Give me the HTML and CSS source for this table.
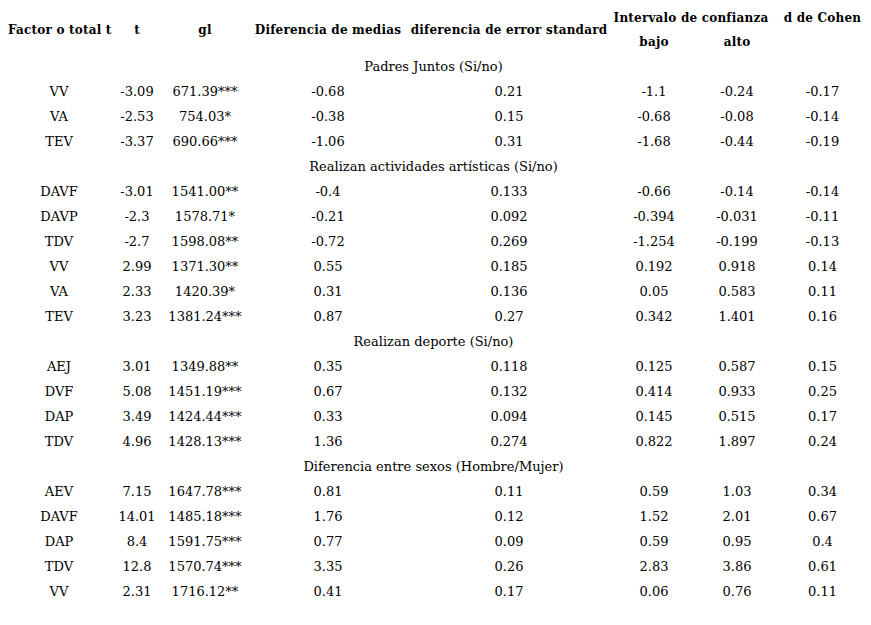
FILE: index.html
```html
<!DOCTYPE html>
<html lang="es">
<head>
<meta charset="utf-8">
<link rel="stylesheet" href="styles.css">
</head>
<body>
<table class="stats">
  <colgroup>
    <col class="c1"><col class="c2"><col class="c3"><col class="c4"><col class="c5"><col class="c6"><col class="c7"><col class="c8">
  </colgroup>
  <thead>
    <tr class="hrow">
      <th rowspan="2">Factor o total t</th>
      <th rowspan="2">t</th>
      <th rowspan="2">gl</th>
      <th rowspan="2">Diferencia de medias</th>
      <th rowspan="2">diferencia de error standard</th>
      <th colspan="2">Intervalo de confianza</th>
      <th class="top">d de Cohen</th>
    </tr>
    <tr class="hrow">
      <th>bajo</th>
      <th>alto</th>
      <th></th>
    </tr>
  </thead>
  <tbody>
    <tr><td colspan="8" class="section">Padres Juntos (Si/no)</td></tr>
    <tr><td>VV</td><td>-3.09</td><td>671.39***</td><td>-0.68</td><td>0.21</td><td>-1.1</td><td>-0.24</td><td>-0.17</td></tr>
    <tr><td>VA</td><td>-2.53</td><td>754.03*</td><td>-0.38</td><td>0.15</td><td>-0.68</td><td>-0.08</td><td>-0.14</td></tr>
    <tr><td>TEV</td><td>-3.37</td><td>690.66***</td><td>-1.06</td><td>0.31</td><td>-1.68</td><td>-0.44</td><td>-0.19</td></tr>
    <tr><td colspan="8" class="section">Realizan actividades artísticas (Si/no)</td></tr>
    <tr><td>DAVF</td><td>-3.01</td><td>1541.00**</td><td>-0.4</td><td>0.133</td><td>-0.66</td><td>-0.14</td><td>-0.14</td></tr>
    <tr><td>DAVP</td><td>-2.3</td><td>1578.71*</td><td>-0.21</td><td>0.092</td><td>-0.394</td><td>-0.031</td><td>-0.11</td></tr>
    <tr><td>TDV</td><td>-2.7</td><td>1598.08**</td><td>-0.72</td><td>0.269</td><td>-1.254</td><td>-0.199</td><td>-0.13</td></tr>
    <tr><td>VV</td><td>2.99</td><td>1371.30**</td><td>0.55</td><td>0.185</td><td>0.192</td><td>0.918</td><td>0.14</td></tr>
    <tr><td>VA</td><td>2.33</td><td>1420.39*</td><td>0.31</td><td>0.136</td><td>0.05</td><td>0.583</td><td>0.11</td></tr>
    <tr><td>TEV</td><td>3.23</td><td>1381.24***</td><td>0.87</td><td>0.27</td><td>0.342</td><td>1.401</td><td>0.16</td></tr>
    <tr><td colspan="8" class="section">Realizan deporte (Si/no)</td></tr>
    <tr><td>AEJ</td><td>3.01</td><td>1349.88**</td><td>0.35</td><td>0.118</td><td>0.125</td><td>0.587</td><td>0.15</td></tr>
    <tr><td>DVF</td><td>5.08</td><td>1451.19***</td><td>0.67</td><td>0.132</td><td>0.414</td><td>0.933</td><td>0.25</td></tr>
    <tr><td>DAP</td><td>3.49</td><td>1424.44***</td><td>0.33</td><td>0.094</td><td>0.145</td><td>0.515</td><td>0.17</td></tr>
    <tr><td>TDV</td><td>4.96</td><td>1428.13***</td><td>1.36</td><td>0.274</td><td>0.822</td><td>1.897</td><td>0.24</td></tr>
    <tr><td colspan="8" class="section">Diferencia entre sexos (Hombre/Mujer)</td></tr>
    <tr><td>AEV</td><td>7.15</td><td>1647.78***</td><td>0.81</td><td>0.11</td><td>0.59</td><td>1.03</td><td>0.34</td></tr>
    <tr><td>DAVF</td><td>14.01</td><td>1485.18***</td><td>1.76</td><td>0.12</td><td>1.52</td><td>2.01</td><td>0.67</td></tr>
    <tr><td>DAP</td><td>8.4</td><td>1591.75***</td><td>0.77</td><td>0.09</td><td>0.59</td><td>0.95</td><td>0.4</td></tr>
    <tr><td>TDV</td><td>12.8</td><td>1570.74***</td><td>3.35</td><td>0.26</td><td>2.83</td><td>3.86</td><td>0.61</td></tr>
    <tr><td>VV</td><td>2.31</td><td>1716.12**</td><td>0.41</td><td>0.17</td><td>0.06</td><td>0.76</td><td>0.11</td></tr>
  </tbody>
</table>
</body>
</html>
```
FILE: styles.css
```css
html, body {
  margin: 0;
  padding: 0;
  background: #ffffff;
  overflow: hidden;
}
body {
  padding: 6px 0 0 8px;
  color: #000000;
  font-family: "DejaVu Serif", "Liberation Serif", serif;
}
.stats {
  border-collapse: collapse;
  table-layout: fixed;
  width: 863px;
}
.c1 { width: 102px; }
.c2 { width: 54px; }
.c3 { width: 82px; }
.c4 { width: 164px; }
.c5 { width: 198px; }
.c6 { width: 92px; }
.c7 { width: 74px; }
.c8 { width: 97px; }
.stats th {
  height: 24px;
  padding: 0;
  font-size: 12px;
  font-weight: bold;
  letter-spacing: 0.2px;
  text-align: center;
  vertical-align: middle;
  white-space: nowrap;
}
.stats td {
  height: 25px;
  padding: 0;
  font-size: 13px;
  text-align: center;
  vertical-align: middle;
  white-space: nowrap;
}
.stats td.section {
  padding-right: 12px;
}
```
